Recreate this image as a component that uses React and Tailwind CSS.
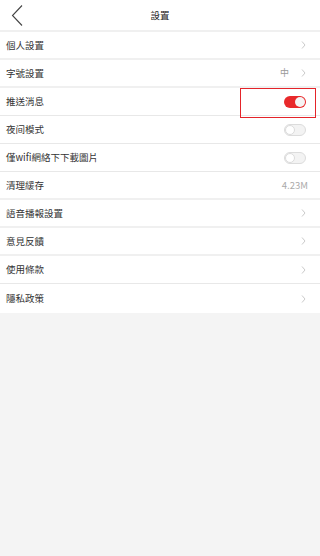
import React from "react";

const Chevron = () => (
  <svg className="w-[5px] h-[8px]" viewBox="0 0 5 8" fill="none">
    <path d="M1 0.5l3 3.5-3 3.5" stroke="#c4c4c4" strokeWidth="0.9" />
  </svg>
);

const Toggle = ({ on }) =>
  on ? (
    <div className="w-[22px] h-[12px] rounded-full bg-[#e8292b] flex items-center justify-end pr-[1px]">
      <div className="w-[10px] h-[10px] rounded-full bg-[#f4f4f4]" />
    </div>
  ) : (
    <div className="w-[22px] h-[12px] rounded-full bg-[#f3f3f3] border border-[#dcdcdc] flex items-center">
      <div className="w-[10px] h-[10px] rounded-full bg-white border border-[#dcdcdc]" />
    </div>
  );

const Row = ({ label, right, thick }) => (
  <div
    className={`h-[28px] flex items-center justify-between pl-[6px] pr-[14px] bg-white ${
      thick ? "border-b-2 border-[#f0f0f0]" : "border-b border-[#e8e8e8]"
    }`}
  >
    <span className="text-[9.5px] text-[#333]">{label}</span>
    {right}
  </div>
);

export default function App() {
  return (
    <div
      className="w-[320px] h-[556px] bg-[#f4f4f4]"
      style={{ fontFamily: '"Noto Sans CJK TC", "Noto Sans", sans-serif' }}
    >
      <div className="h-[32px] bg-white flex items-center relative border-b-2 border-[#f0f0f0]">
        <svg className="absolute left-[11px] top-[5px] w-[12px] h-[21px]" viewBox="0 0 12 21" fill="none">
          <path d="M11 0.5L1.5 10.5l9.5 10" stroke="#444" strokeWidth="1.1" />
        </svg>
        <div className="w-full text-center text-[9.5px] text-[#222]">設置</div>
      </div>
      <Row label="個人設置" right={<Chevron />} thick />
      <Row
        label="字號設置"
        thick
        right={
          <div className="flex items-center gap-[12px]">
            <span className="text-[9px] text-[#999]">中</span>
            <Chevron />
          </div>
        }
      />
      <div className="relative">
        <Row label="推送消息" right={<Toggle on />} />
        <div className="absolute left-[240px] top-[0px] w-[76px] h-[30px] border-[1.5px] border-[#e4242a]" />
      </div>
      <Row label="夜间模式" right={<Toggle />} />
      <Row label="僅wifi網絡下下載圖片" right={<Toggle />} />
      <Row label="清理緩存" thick right={<span className="text-[9.5px] text-[#aaa] -mr-[2px]">4.23M</span>} />
      <Row label="語音播報設置" thick right={<Chevron />} />
      <Row label="意見反饋" thick right={<Chevron />} />
      <Row label="使用條款" right={<Chevron />} />
      <div className="h-[29px] flex items-center justify-between pl-[6px] pr-[14px] bg-white">
        <span className="text-[9.5px] text-[#333]">隱私政策</span>
        <Chevron />
      </div>
    </div>
  );
}
